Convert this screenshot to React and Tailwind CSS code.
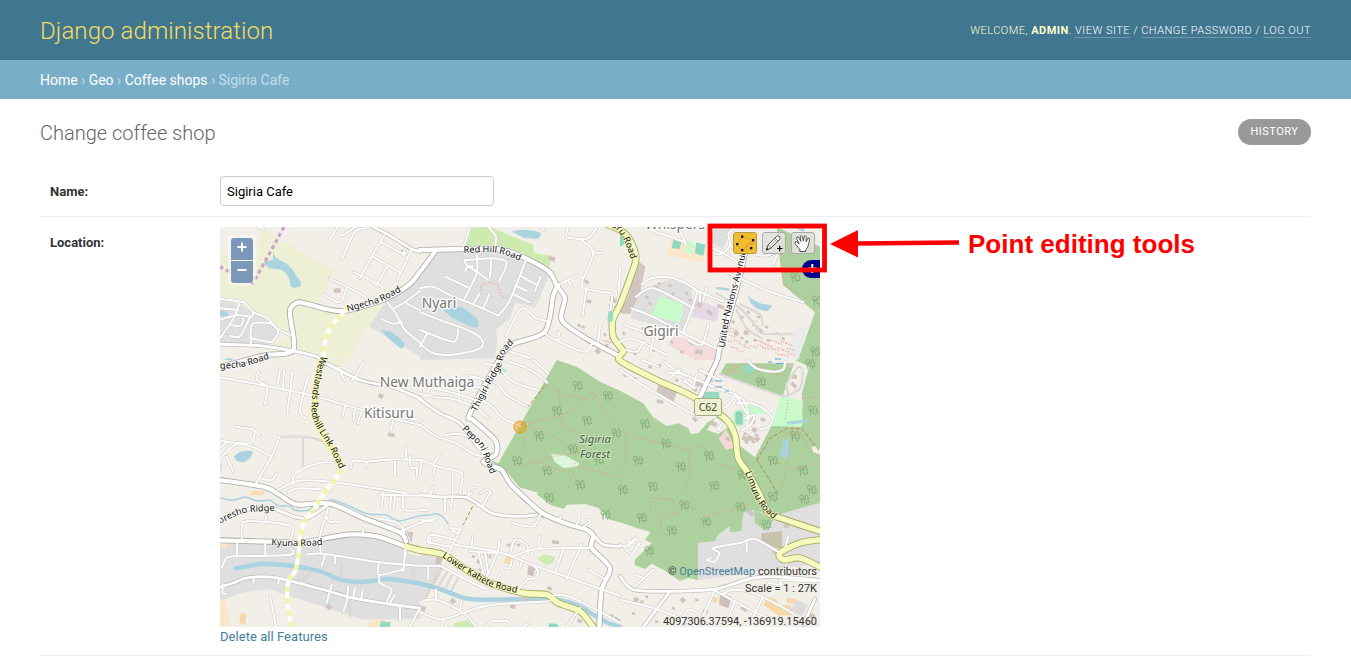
import React from "react";

// Survey sheets: every sheet has its own origin and is digitised at three units per map pixel.
const SHEETS = {
  A: [220, 225], B: [420, 225], C: [620, 225],
  D: [220, 360], E: [420, 360], F: [620, 360],
  G: [220, 493], H: [420, 493], I: [620, 493],
};

function points(src) {
  let sheet = SHEETS.A;
  const out = [];
  src.trim().split(/\s+/).forEach((t) => {
    if (SHEETS[t]) { sheet = SHEETS[t]; return; }
    const [x, y] = t.split(",").map(Number);
    out.push([sheet[0] + x / 3, sheet[1] + y / 3]);
  });
  return out;
}
const f = (n) => n.toFixed(1);
function line(src) {
  return "M" + points(src).map(([x, y]) => f(x) + " " + f(y)).join("L");
}
function curve(src) {
  const p = points(src);
  let d = "M" + f(p[0][0]) + " " + f(p[0][1]);
  for (let i = 0; i < p.length - 1; i++) {
    const a = p[i - 1] || p[i], b = p[i], c = p[i + 1], e = p[i + 2] || c;
    d += `C${f(b[0] + (c[0] - a[0]) / 7)} ${f(b[1] + (c[1] - a[1]) / 7)} ${f(c[0] - (e[0] - b[0]) / 7)} ${f(c[1] - (e[1] - b[1]) / 7)} ${f(c[0])} ${f(c[1])}`;
  }
  return d;
}

const AREAS = [
  ["#eef0d5", "A 118,6 A 342,134 292,238 372,258 492,232 448,304 386,405 300,400 225,375 160,360 210,330 110,270 0,218 0,80 110,115"],
  ["#eef0d5", "D 310,0 386,0 350,32 310,15"],
  ["#e0dfdf", "A 0,222 60,240 110,268 180,312 158,358 0,352"],
  ["#e0dfdf", "A 600,135 540,200 495,232 448,304 600,395 B 0,405 225,400 232,345 228,315 270,280 285,232 345,250 392,140 300,100 230,80 50,80 0,140"],
  ["#cdebb0", "B 148,6 210,6 340,60 342,84 392,92 388,128 300,92 240,70 132,66"],
  ["#e0dfdf", "C 60,195 160,160 215,190 220,240 190,322 30,280"],
  ["#e0dfdf", "C 285,6 335,6 310,75 270,50"],
  ["#c8facc", "C 118,214 192,235 180,294 96,272"],
  ["#e6d9e6", "C 228,222 298,250 290,290 215,276"],
  ["#f4dcdc", "C 165,330 300,375 285,405 225,405 145,360"],
  ["#fbe6cc", "C 152,40 262,75 248,114 140,90"],
  ["#8fd8c0", "C 160,45 185,50 178,72 156,70"],
  ["#8fd8c0", "C 228,52 256,60 250,92 225,85"],
  ["#8fd8c0", "C 0,20 10,25 18,55 0,65"],
  ["#c8facc", "C 200,48 222,52 217,88 194,82"],
  ["#d1c5c0", "C 50,105 76,125 60,205 30,268 0,265 28,205"],
  ["#add19e", "C 470,6 600,65 600,255 585,262 490,180 478,90"],
  ["#add19e", "C 585,262 600,255 600,405 530,405 550,360"],
  ["#ebebeb", "C 530,302 565,310 535,405 500,375"],
  ["#add19e", "E 410,0 470,20 540,65 600,92 F 70,130 100,172 140,198 175,190 205,205 212,222 235,220 262,188 290,170 330,195 350,250 405,292 455,197 543,200 548,130 545,100 568,20 525,0 600,0 600,405 I 600,30 460,70 400,52 370,60 365,115 330,118 330,100 295,125 285,145 235,150 235,262 205,255 180,264 130,230 95,212 75,228 43,215 45,200 95,150 75,140 92,117 50,105 0,88 H 570,80 535,45 495,33 440,35 432,48 390,35 350,4 E 355,398 298,382 260,335 232,320 210,300 235,310"],
  ["#e0dfdf", "I 600,30 460,70 400,52 370,60 365,115 330,118 330,100 295,125 285,145 235,150 235,262 350,245 480,225 600,215"],
  ["#add19e", "I 402,50 460,80 440,115 405,90"],
  ["#c5c3ab", "I 425,120 485,115 487,170 422,150"],
  ["#f2efe9", "F 260,210 286,172 330,198 295,222"],
  ["#f4d7d7", "F 318,208 345,262 318,270 296,236"],
  ["#add19e", "F 318,10 440,10 522,10 488,108 300,42"],
  ["#99d9c3", "F 372,14 405,18 402,40 372,38"],
  ["#c8facc", "F 482,108 545,122 548,190 543,200 455,197"],
  ["#c8facc", "F 380,128 430,145 448,160 395,164 370,140"],
  ["#99d9c3", "F 246,95 298,95 298,125 238,112"],
  ["#d1c5c0", "F 120,62 174,90 160,126 106,104"],
  ["#def6dc", "E 393,283 432,284 478,310 472,320 430,324 405,306"],
  ["#f2efe9", "F 575,262 585,258 600,268 600,284 580,276"],
  ["#cdebb0", "H 350,196 375,184 406,191 400,210 380,216"],
  ["#cdebb0", "H 105,390 140,382 166,402 100,402"],
  ["#e0dfdf", "G 0,145 160,145 300,150 360,130 470,130 560,160 555,180 600,190 600,378 430,380 210,310 145,288 60,300 0,325"],
  ["#e0dfdf", "H 0,180 60,190 65,220 20,318 0,325"],
  ["#fbe6cc", "G 0,318 18,320 32,400 0,400"],
  ["#fbe6cc", "G 2,148 24,148 20,164 2,164"],
  ["#fbe6cc", "G 446,380 515,384 512,402 445,402"],
  ["#99d9c3", "G 482,384 512,388 510,402 480,402"],
  ["#f6d7ad", "G 62,360 80,364 75,395 58,390"],
  ["#fad8a5", "I 440,312 470,318 475,335 510,335 520,365 475,368 430,335"],
  ["#fad8a5", "I 500,315 528,318 525,332 500,330"],
  ["#fad8a5", "I 280,310 295,315 288,330 277,325"],
  ["#fad8a5", "H 258,188 272,192 268,214 252,210"],
  ["#8fd8c0", "H 388,390 412,394 415,402 385,402"],
  ["#c6c2b8", "I 300,300 334,312 325,345 298,335"],
  ["#dcdcdc", "I 530,320 565,335 545,370 510,350"],
  ["#e0dfdf", "D 0,310 8,312 5,335 0,332"],
  ["#fbdcb4", "D 95,392 135,392 130,405 90,405"],
  ["#b6f0c5", "E 245,20 260,30 248,46 240,40"],
  ["#d1c5c0", "G 558,115 580,118 575,150"],
  ["#cfbfb8", "H 50,190 68,195 60,218 45,212"],
  ["#cfbfb8", "H 325,218 345,225 340,250 322,245"],
  ["#cfbfb8", "I 305,308 332,318 325,345 298,335"],
];
const WATER = [
  "A 160,82 170,100 205,120 228,150 244,180 216,187 205,155 185,135 150,130 132,112 158,105",
  "A 0,255 22,262 24,275 0,272", "A 14,402 30,400 40,405 12,405",
  "A 482,316 515,322 552,355 543,370 505,340",
  "B 275,20 310,14 358,22 355,40 315,40", "B 70,255 120,245 172,283 166,308 95,278",
  "C 382,208 395,222 425,236 455,242 440,258 410,250 392,235", "C 288,186 325,190 325,197 290,193",
  "C 515,0 550,6 550,20 530,10",
  "D 42,290 60,276 96,273 93,290 72,306 50,303",
  "F 490,236 508,240 504,262 510,282 496,294 480,284 488,262",
  "F 500,185 555,180 555,188 500,194",
];
const RIVERS = [
  [4.5, "G 48,226 90,218 130,212 210,218 260,226 310,238 350,256 400,266 450,265 495,258 540,262 600,272 H 60,288 135,316 200,320 340,318 420,322 480,340 520,365 560,388 600,402"],
  [1.6, "G 0,14 40,22 75,12 110,24 150,22 175,38 210,40 225,52 265,52 285,36 320,36 332,20 375,34 440,62 500,66 535,84 600,68 H 30,66 50,62 68,72 84,92"],
];
// Kinds: s = service, m = residential, w = tertiary, W = main white, y = secondary
const ROADS = [
  ["m", "A 100,0 130,12"],
  ["m", "A 352,8 330,42"], ["m", "A 366,102 405,20 440,10"], ["m", "A 366,32 405,8"],
  ["m", "A 492,32 455,95 420,160"], ["m", "A 484,52 548,86 552,78"], ["m", "A 458,95 540,142"], ["m", "A 402,142 440,160 490,188"], ["m", "A 575,72 532,165"], ["m", "A 502,125 468,182"], ["m", "A 550,92 556,84"],
  ["m", "A 330,162 380,185 435,215"], ["m", "A 310,208 360,232 380,188"],
  ["m", "A 0,222 70,232 100,262 140,278 170,310 210,330"], ["m", "A 0,285 50,270 92,275 100,262"], ["m", "A 60,230 45,272 28,300 0,340"], ["m", "A 30,300 62,302 70,282"], ["m", "A 30,332 60,334 90,276"], ["m", "A 92,355 92,320 100,295 150,295 175,320 155,352"], ["m", "A 92,340 130,348 155,352"], ["m", "A 0,250 55,255"],
  ["m", "A 502,232 530,270 555,315 600,352"], ["m", "A 522,250 560,228 600,198"], ["m", "A 484,282 520,296 546,290"], ["m", "A 560,235 600,256"],
  ["m", "B 150,6 130,70"], ["m", "B 205,6 228,35 225,62"], ["m", "B 365,6 372,16"],
  ["m", "B 170,88 170,145 130,228"], ["m", "B 135,106 215,100 260,112 238,168"], ["m", "B 214,104 210,158"], ["m", "B 134,108 140,122 158,124"], ["m", "B 136,138 148,126 205,165"], ["m", "B 75,155 145,188"],
  ["m", "B 318,105 270,225 235,272"], ["m", "B 0,190 40,185 100,215 160,238 235,272"], ["m", "B 300,152 348,178"], ["m", "B 362,155 345,198"], ["m", "B 285,180 320,198"], ["m", "B 278,206 328,232"], ["m", "B 178,205 162,235"], ["m", "B 208,208 190,250"],
  ["m", "B 0,262 60,285 150,318 186,345 180,370 110,388 40,385 0,355"], ["m", "B 0,315 100,350 115,312"], ["m", "B 22,325 0,365"],
  ["m", "B 258,332 305,250 345,278 378,288"], ["m", "B 412,185 430,172 470,154 490,160"], ["m", "B 445,168 455,185"], ["m", "B 435,170 440,182"],
  ["m", "B 444,6 440,35 480,42 505,40 530,10"], ["m", "B 480,42 520,82 490,160 488,188 540,200 575,208 570,262"], ["m", "B 500,185 488,272"], ["m", "B 520,82 545,84"], ["m", "B 600,130 596,205"],
  ["m", "B 372,322 400,342 492,380 515,358"], ["m", "B 415,320 420,340 410,345"], ["m", "B 540,300 535,350"], ["m", "B 270,380 330,400"],
  ["m", "C 90,15 190,50 195,60"], ["m", "C 175,8 195,50"], ["m", "C 270,80 300,88 330,62 325,28 340,10"], ["m", "C 330,60 370,95"], ["m", "C 410,90 440,92 470,84 460,118"], ["m", "C 260,60 320,90 350,110"],
  ["m", "C 65,178 100,158 160,160 222,190 228,215 188,325"], ["m", "C 48,215 100,190 222,250"], ["m", "C 35,250 105,278 200,330 290,370"], ["m", "C 12,300 100,330"], ["m", "C 0,350 30,340 60,350 140,390"], ["m", "C 225,195 310,230"], ["m", "C 260,190 250,225"], ["m", "C 240,204 240,230"], ["m", "C 0,370 50,380 70,350"],
  ["m", "C 268,130 310,138 450,200 550,232"], ["s", "C 290,205 360,250 405,300 430,325 515,328"], ["m", "C 205,345 245,360 265,300"], ["s", "C 362,238 420,268 428,300"], ["s", "C 350,255 380,310 425,340"], ["m", "C 100,340 90,390"],
  ["m", "D 115,35 110,60 140,80 135,132"], ["m", "D 180,28 172,82"], ["m", "D 192,30 188,85"], ["m", "D 218,35 202,158"], ["m", "D 265,45 240,150 258,175"],
  ["m", "D 0,52 130,76 290,110 430,150 E 0,180"], ["m", "D 375,140 368,170"], ["m", "D 405,148 400,180"], ["m", "D 425,155 412,190"], ["m", "D 430,8 410,45 395,62"], ["m", "D 355,22 375,62"],
  ["m", "D 525,178 600,195"], ["m", "D 520,180 512,210"],
  ["m", "D 48,200 95,208 120,225"], ["m", "D 105,212 90,250 0,242"], ["m", "D 0,295 50,252 100,262 150,288"], ["m", "D 20,245 0,265"], ["m", "D 20,290 40,335"], ["m", "D 178,230 160,280 105,375"], ["s", "D 176,230 250,230 300,240 322,258"], ["s", "D 250,232 248,320"], ["m", "D 120,355 155,360 170,340"],
  ["m", "D 342,308 300,308 240,330 220,350 220,372"], ["m", "D 175,390 225,365 300,362 400,375 560,400"], ["m", "D 392,325 398,302 440,305 520,298 600,300"], ["m", "D 440,305 440,320"], ["m", "D 525,305 525,345"], ["m", "D 556,260 560,300"], ["m", "D 570,290 572,322 590,325 590,350"], ["m", "D 205,395 240,385 330,390"],
  ["m", "E 190,10 230,20 280,65 350,90"], ["m", "E 270,6 310,20 350,42 382,68"], ["m", "E 340,0 385,40"], ["m", "E 150,48 230,70 260,105 320,140"], ["m", "E 170,115 210,135 250,175 300,198"], ["m", "E 55,55 150,78 200,85"], ["m", "E 0,100 25,108 35,85 160,118 170,150"], ["m", "E 40,112 90,115 150,135"], ["m", "E 115,108 120,125"], ["m", "E 165,138 205,175"], ["m", "E 150,48 195,60"], ["m", "E 190,90 170,110"],
  ["m", "E 0,195 50,230 110,250 160,282 200,290"], ["m", "E 75,225 120,222 160,240 195,272"], ["m", "E 0,298 60,322 125,340 120,400"], ["m", "E 62,280 40,312"], ["m", "E 5,300 0,340"], ["m", "E 98,340 98,402"], ["m", "E 45,320 40,345"], ["m", "E 40,380 30,405"], ["m", "E 145,402 150,385 165,382"], ["m", "E 180,400 200,388 215,400"],
  ["m", "F 135,5 165,30 245,65 305,90 350,105 360,130"], ["m", "F 140,38 180,40 200,50"], ["m", "F 150,55 180,28"], ["m", "F 65,0 115,20"], ["m", "F 0,30 60,70 110,100 210,158 240,170"], ["m", "F 310,145 330,130 345,108 370,120 385,160 380,205"], ["m", "F 350,130 390,130 430,145 458,175 445,200 420,208"], ["m", "F 370,178 400,165 400,180 385,200 365,210"], ["m", "F 350,110 380,160"], ["m", "F 300,60 240,30"], ["s", "F 300,42 490,108 500,70 535,20"], ["m", "F 380,0 410,25 460,35 490,28 495,5"], ["s", "F 535,20 548,30 540,85 500,108"], ["m", "F 295,210 305,190"], ["m", "F 230,42 220,80"], ["m", "F 190,62 225,85"],
  ["m", "G 490,0 485,40"], ["m", "G 515,2 510,45"], ["m", "G 480,5 600,8"], ["m", "G 550,10 552,50 600,52"], ["m", "G 525,4 522,44"],
  ["m", "G 65,138 68,90 110,85 215,100 212,138"], ["m", "G 138,68 138,86"], ["m", "G 360,88 328,86 320,70"], ["m", "G 325,45 300,128 302,180"], ["m", "G 5,225 20,195 50,190 210,185 212,165"], ["m", "G 50,188 52,145"], ["m", "G 136,145 136,186"],
  ["m", "G 262,185 310,182 480,208 600,218 H 60,218"], ["m", "G 315,185 305,220"], ["m", "G 345,190 345,212"], ["s", "G 362,195 362,255"], ["m", "G 478,208 476,245 540,232 550,225"], ["m", "G 476,245 480,270 515,290 500,325"], ["m", "G 525,305 510,330"], ["m", "G 555,175 550,235"], ["s", "G 578,215 578,260"],
  ["w", "G 0,282 40,270 80,255 150,252 215,265 310,290 400,315 500,332 600,345"], ["m", "G 102,255 100,270"], ["m", "G 178,258 174,272"], ["m", "G 8,275 8,300 18,302"], ["m", "G 335,275 320,330"], ["m", "G 385,280 378,335 370,355"], ["m", "G 405,285 400,312"], ["m", "G 428,290 424,315"], ["s", "G 385,315 390,370"], ["m", "G 540,335 540,380"], ["m", "G 600,345 570,400"], ["m", "G 150,310 168,400"], ["m", "G 555,160 558,185"], ["m", "G 430,108 428,125"],
  ["s", "G 265,230 270,240 245,268"], ["s", "G 248,232 236,262 258,270"], ["s", "G 244,246 264,250"],
  ["m", "G 465,75 520,85 545,100 552,118"], ["m", "G 540,115 600,90"],
  ["w", "H 0,5 60,12 140,14 220,62 300,70 350,65"], ["m", "H 75,14 75,58"], ["m", "H 98,12 92,45"], ["m", "H 210,0 185,45"], ["m", "H 155,0 140,12"], ["m", "H 365,55 340,100 275,90"], ["m", "H 0,90 50,75"], ["m", "H 0,80 40,85"], ["m", "H 0,50 20,52"],
  ["m", "H 125,102 68,215"], ["m", "H 90,105 120,110"], ["m", "H 95,112 115,120"], ["m", "H 22,148 34,125 105,140"], ["m", "H 32,135 30,150"], ["m", "H 25,148 95,162"],
  ["m", "H 105,155 225,175 275,190 350,220 600,308"], ["m", "H 158,130 155,160"], ["m", "H 238,142 232,180 200,250"], ["m", "H 275,192 350,168 510,165"], ["m", "H 360,130 355,150 362,168"], ["m", "H 270,185 285,140 320,155 325,185"], ["m", "H 430,170 405,238"], ["m", "H 484,155 440,258"], ["m", "H 175,175 190,240"], ["m", "H 150,175 230,180"], ["m", "H 195,178 205,245"], ["m", "H 275,200 270,225 255,225"], ["m", "H 305,205 300,225"], ["m", "H 505,230 550,255"], ["m", "H 422,70 418,80"], ["m", "H 480,70 470,95"], ["m", "H 500,80 512,85 492,100"],
  ["m", "H 65,220 100,240 190,285 210,282"], ["s", "H 85,230 55,280"], ["s", "H 100,238 75,288"], ["s", "H 118,250 95,290"], ["m", "H 25,222 25,260"], ["m", "H 240,240 232,262"], ["s", "H 70,222 42,272"],
  ["m", "H 0,330 15,322 55,322 130,360 170,402"], ["m", "H 0,358 70,378 200,338 390,325"], ["m", "H 48,290 48,318"], ["m", "H 125,322 120,350"], ["m", "H 70,378 65,402"], ["m", "H 200,402 215,385 260,385 280,402"], ["m", "H 310,402 325,390"], ["m", "H 345,220 355,240 340,258 325,258 295,288"], ["m", "H 480,345 440,402"], ["m", "H 380,310 440,308 520,345 600,390"],
  ["w", "I 0,250 40,290 150,295 285,288 400,255 480,252 600,262"], ["w", "I 70,402 150,295"], ["m", "I 0,155 20,160 50,135"], ["m", "I 20,160 40,140"], ["m", "I 15,165 35,182 60,150"], ["m", "I 20,145 42,150"], ["m", "I 45,280 100,230"], ["m", "I 45,245 70,255"],
  ["m", "I 272,195 262,202 285,205 298,180 280,165 360,150 405,138 480,180"], ["m", "I 380,150 380,175"], ["m", "I 505,130 495,165"],
  ["m", "I 0,320 100,345 170,372 230,402"], ["m", "I 280,290 400,355 500,395"], ["m", "I 310,302 340,290 400,300 500,350 560,395"], ["m", "I 285,290 240,390"], ["w", "I 585,318 550,395"], ["m", "I 445,270 485,275 485,262 600,265"], ["m", "I 430,310 400,370"], ["m", "I 345,325 325,375"], ["m", "I 180,400 205,350 240,365"],
  ["w", "A 450,0 520,38 575,72 600,80 B 0,75 55,75"], ["W", "B 0,75 132,72 230,72 300,92 385,138 412,185 435,220 425,285 490,335 600,395"],
  ["W", "B 45,80 12,125 0,140 A 575,172 540,198 480,228 372,258 310,250 240,232 215,245 210,270 220,375 140,390 90,402 D 0,22"],
  ["w", "A 0,358 120,362 220,378 290,395 D 310,5 420,60 520,82 600,115 E 0,118 60,160 120,190 170,255 210,300"],
  ["W", "B 415,180 400,210 375,320 278,358 240,400 E 150,160 160,180 225,240 228,282 190,305 E 215,318 245,330 270,370 305,405 H 320,20 370,62 440,92 500,110 520,130 515,165 570,225 545,290 538,402"],
  ["w", "H 520,125 550,155 600,160"],
  ["W", "D 0,360 130,380 175,402 G 200,20 235,35 330,32 430,75 540,118 558,145"], ["W", "G 0,142 150,146 250,148 380,125 470,130 560,162"], ["w", "G 160,45 225,72 265,75 320,38"], ["w", "G 0,82 50,60 100,45 160,45"],
  ["W", "C 375,85 348,200 298,375 F 292,0 240,110"],
  ["y", "B 565,0 600,15 C 30,45 48,100 30,160 0,240 B 578,285 580,335 600,365 C 10,380 F 0,2 110,60 200,100 260,135 F 320,180 345,225 355,295 385,340 420,405 I 445,60 480,75 600,115"],
  ["y", "I 600,140 540,150 480,180 490,200 540,195 600,222"],
  ["y", "G 558,160 600,172 H 70,185 130,225 210,270 310,300 380,305 415,330 480,355 520,402"],
];
const STRIPED = "A 385,240 360,275 335,300 318,340 308,405 D 290,70 285,150 310,230 365,310 350,350 310,402 G 285,45 255,80 240,130 235,190 225,235 205,265 202,330 215,402";
const PATHS = [
  "E 380,70 430,105 515,120 550,100 600,160", "E 415,85 420,130 430,200 485,220", "E 300,195 370,210 480,280 390,290 300,320", "E 520,90 460,150 410,170 300,195", "E 320,195 300,320", "E 465,310 440,400", "E 470,320 600,350", "E 330,300 450,340", "E 600,200 560,160 515,95",
  "F 0,212 60,235 130,250 205,268 210,350 180,400", "F 205,268 245,255 290,310 350,330", "F 15,220 18,300 0,330", "F 545,115 600,110", "F 420,280 480,230 535,205 570,275 600,285", "F 465,300 520,330 600,305", "F 520,200 490,370 470,405",
  "I 95,15 90,50 125,75 120,110 145,130", "I 95,15 160,20 165,60 125,75", "I 180,20 260,70 380,40 400,15",
  "C 480,90 490,180", "C 490,180 560,220 600,170", "C 500,65 520,115",
  "F 318,40 370,10 420,20", "F 400,40 430,30 495,45", "F 505,120 495,180",
  "B 183,206 182,182 210,172 235,180 240,210 262,220", "H 62,225 10,325", "E 0,110 20,60",
];
const TREES = "C 525,158 C 590,228 E 472,78 E 563,108 E 410,153 E 500,182 E 588,220 E 356,228 E 290,303 E 458,268 E 380,333 E 480,375 E 536,300 F 422,66 F 74,192 F 137,252 F 266,288 F 182,320 F 53,302 F 8,390 F 98,380 F 282,378 F 458,302 F 524,228 F 548,332 F 578,152 F 366,345 F 570,12 I 65,75 I 258,87 I 155,113 I 192,37 I 360,42 I 438,95 I 87,174 I 457,12 I 552,20 H 386,15 H 556,66 F 575,390 C 585,380";
const BUILDINGS = "A 350,196 A 548,84 D 484,108 D 512,225 G 328,343 B 500,172 B 394,100 B 508,230 B 535,380 B 578,225 H 180,205 H 335,232 H 318,318 H 390,288 H 280,340 H 405,148 H 100,325 H 480,385 H 5,345 I 258,355 I 190,322 I 370,348 I 50,320 I 500,100 I 392,58 I 465,178 I 578,368 C 268,262 C 240,240 C 215,355 C 235,380 C 422,320 C 350,325 C 300,245 C 380,322 F 225,180 F 280,190 F 325,238 F 525,50 F 520,75 F 400,185 F 430,180 F 235,72 F 225,90 F 405,210 F 118,125 F 395,235 F 410,240 F 375,235 F 512,20 H 575,370 H 590,380 H 370,68 H 198,185";
const SPECKS = "C 95,190 C 118,175 C 130,200 C 150,180 C 160,205 C 175,222 C 200,205 C 80,215 C 90,235 C 110,185 C 70,310 C 85,360 C 45,385 C 210,225 C 12,325 C 100,375 C 155,350 C 185,380 C 232,345 C 260,320 C 340,290 C 365,275 C 385,260 C 415,275 C 440,305 C 470,325 C 490,340 C 380,350 C 405,345 C 365,338 C 445,345 F 15,45 F 45,55 F 70,75 F 90,20 F 120,15 F 170,60 F 205,72 F 260,45 F 275,60 F 375,220 F 388,228 F 410,225 F 380,245 F 400,245 F 415,235 H 160,190 H 215,180 H 265,155 H 280,150 H 295,155 H 210,190 H 180,230 H 100,105 I 65,325 I 80,310 I 40,360 I 90,375 I 110,385 I 160,345 I 230,320 I 350,375 B 555,328 B 572,340 B 580,300 B 490,305 B 478,300 B 560,360";
const RED_SPECKS = "C 405,300 C 418,345 C 430,352 C 445,358 C 460,345 C 475,352 C 490,348 C 505,355 C 510,370 C 495,375 C 480,368 C 465,372 C 450,365 C 435,368 C 420,360 C 400,362 C 380,365 C 365,355 C 350,345 C 335,330 C 325,345 C 340,365 C 360,375 C 512,385 C 495,388 C 475,385 C 340,310 C 325,315 C 400,285 C 415,312 B 575,240 B 580,215 B 570,350 B 556,345 F 330,30 F 345,15 F 350,35 F 420,18 F 440,30 F 465,38";

const KINDS = ["s", "m", "w", "W", "y"];
const CASE = { s: 1.9, m: 3.1, w: 4.2, W: 5.9, y: 7.2 };
const FILL = { s: 1, m: 2, w: 2.9, W: 4.3, y: 5.5 };
const CASE_COLOR = { s: "#cccac8", m: "#cbc9c7", w: "#b9b7b5", W: "#aaa8a6", y: "#a3a860" };

const LABELS = [
  ["ngecha", "Ngecha Road", "A 383,260 440,244 490,228 545,198"],
  ["ngecha2", "gecha Road", "D 1,26 60,22 100,12 A 155,398"],
  ["redhill", "Red Hill Road", "B 131,84 180,82 225,83 260,91 310,112"],
  ["thigiri", "Thigiri Ridge Road", "E 170,155 202,92 242,22 B 257,380 300,338"],
  ["peponi", "Peponi Road", "E 125,208 150,233 178,260 195,300 212,345"],
  ["westlands", "Westlands Redhill Link Road", "A 305,393 D 296,10 282,70 275,130 278,175 298,215 325,258 360,330 372,355"],
  ["loresho", "oresho Ridge", "G 0,92 50,68 90,57 180,53"],
  ["kyuna", "Kyuna Road", "G 154,156 230,160 320,155"],
  ["kabete", "Lower Kabete Road", "H 66,193 120,228 160,252 210,280 310,304"],
  ["limuru", "Limuru Road", "F 375,338 390,375 I 402,8 425,45 475,92"],
  ["limuru2", "uru Road", "C -28,4 -5,20 14,50 32,100"],
  ["nations", "United Nations Avenue", "C 314,369 330,270 352,190 382,66"],
];

function PlaceName({ x, y, children }) {
  return (
    <text x={x} y={y} textAnchor="middle" className="fill-[#777] font-['Noto_Sans',sans-serif] text-[13.8px]" stroke="#fff" strokeOpacity=".75" strokeWidth="3" strokeLinejoin="round" paintOrder="stroke">{children}</text>
  );
}

function Map() {
  return (
    <svg width="600" height="400" viewBox="220 227 600 400" className="block overflow-hidden">
      <rect x="220" y="227" width="600" height="400" fill="#f2efe9" />
      {AREAS.map(([c, s], i) => <path key={i} d={line(s) + "Z"} fill={c} />)}
      {WATER.map((s, i) => <path key={i} d={curve(s) + "Z"} fill="#aad3df" />)}
      {RIVERS.map(([w, s], i) => <path key={i} d={curve(s)} fill="none" stroke="#aad3df" strokeWidth={w} strokeLinecap="round" />)}
      {points(BUILDINGS).map(([x, y], i) => <rect key={i} x={x - 3} y={y - 2} width={i % 3 ? 5 : 7} height={i % 2 ? 3.5 : 4.5} fill="#d0c4bc" transform={`rotate(${(i * 37) % 50} ${x} ${y})`} />)}
      {points(SPECKS).map(([x, y], i) => <rect key={i} x={x - 1.5} y={y - 1} width="3.4" height="2.6" fill="#cfc2ba" transform={`rotate(${(i * 29) % 60} ${x} ${y})`} />)}
      {points(RED_SPECKS).map(([x, y], i) => <path key={i} d={`M${x - 3} ${y}l7 2`} stroke="#f39b90" strokeWidth="1" strokeDasharray="1.4 1.4" />)}
      {PATHS.map((s, i) => <path key={i} d={line(s)} fill="none" stroke="#ef8f7d" strokeWidth=".9" strokeDasharray="1.2 1.9" />)}
      <g fill="none" stroke="#b3894a" strokeWidth="1" strokeDasharray="4 2">
        <path d={line("F 410,300 450,235 500,205 545,205 600,275")} />
        <path d={line("F 410,300 440,345 475,405")} />
        <path d={line("H 158,40 130,95")} />
        <path d={line("E 385,65 320,145")} />
      </g>
      {points(TREES).map(([x, y], i) => (
        <g key={i} transform={`translate(${f(x)} ${f(y)})`} fill="none" stroke="#85ac78" strokeWidth=".9">
          <ellipse cx="-2.2" cy="-2.1" rx="2" ry="2.5" /><path d="M-2.2-2V5M2.5-5L.3-1.2H1.5L0 2.6H5L3.5-1.2H4.7ZM2.5 2.6V4.8" />
        </g>
      ))}
      {KINDS.map((k) => (
        <g key={k} fill="none" stroke={CASE_COLOR[k]} strokeWidth={CASE[k]} strokeLinejoin="round" strokeLinecap="round">
          {ROADS.filter((r) => r[0] === k).map((r, i) => <path key={i} d={curve(r[1])} />)}
        </g>
      ))}
      {KINDS.map((k) => (
        <g key={k} fill="none" stroke={k === "y" ? "#f7fabf" : k === "s" ? "#e8e6e4" : "#fff"} strokeWidth={FILL[k]} strokeLinejoin="round" strokeLinecap="round">
          {ROADS.filter((r) => r[0] === k).map((r, i) => <path key={i} d={curve(r[1])} />)}
        </g>
      ))}
      <g fill="none" strokeWidth="4.2">
        <path d={curve(STRIPED)} stroke="#fff" /><path d={curve(STRIPED)} stroke="#f0f5a8" strokeDasharray="6 6" />
      </g>
      <path d={curve("D 308,0 290,70 285,150 310,230 365,305")} fill="none" stroke="#eff3a5" strokeWidth="5.5" />
      <path d={line("A 192,6 98,176 0,125")} fill="none" stroke="#c993c9" strokeOpacity=".85" strokeWidth="3.2" strokeDasharray="4 3" />
      <g fill="none" stroke="#59a3e0" strokeWidth="1.2"><path d="M715 381h7M715 387h7M725 391h4M768 362h4M776 363.500h7M775 359h6" /></g>
      <rect x="734.5" y="410.500" width="9" height="15" rx="4" fill="#8ed3b9" stroke="#bdf3c5" strokeWidth="2" />
      <rect x="608" y="311" width="5" height="11" rx="2" fill="#99d9c3" transform="rotate(8 610 316)" />

      <PlaceName x="439" y="307.500">Nyari</PlaceName>
      <PlaceName x="661" y="336">Gigiri</PlaceName>
      <PlaceName x="427" y="386.500">New Muthaiga</PlaceName>
      <PlaceName x="389" y="417.500">Kitisuru</PlaceName>
      <PlaceName x="675" y="229">Whispers</PlaceName>
      <g className="font-['Noto_Sans',sans-serif] text-[11.2px] italic" fill="#3c5f3a" textAnchor="middle" stroke="#dcebd3" strokeOpacity=".7" strokeWidth="2" paintOrder="stroke">
        <text x="595" y="443">Sigiria</text><text x="595" y="457.500">Forest</text>
      </g>
      {LABELS.map(([id, t, s]) => (
        <g key={id}>
          <path id={id} d={curve(s)} fill="none" />
          <text className="font-['Noto_Sans',sans-serif] text-[9.2px]" fill="#111" stroke={/westl|kabete|limuru/.test(id) ? "#f7fabf" : "#fff"} strokeOpacity=".85" strokeWidth="1.6" paintOrder="stroke"><textPath href={"#" + id}>{t}</textPath></text>
        </g>
      ))}
      <rect x="694.500" y="398.500" width="27" height="17" rx="2" fill="#edf0d3" stroke="#a5ab7c" />
      <text x="708" y="411" textAnchor="middle" className="font-['Noto_Sans',sans-serif] text-[10.5px]" fill="#47491d">C62</text>

      <circle cx="520" cy="427" r="6" fill="#ee9900" fillOpacity=".45" stroke="#ee9900" />

      <rect x="228" y="235" width="28" height="51" rx="4" fill="#fff" fillOpacity=".4" />
      <path d="M231 260V241q0-3 3-3h16q3 0 3 3V260Z" fill="#7b98bc" />
      <path d="M231 261H253V280q0 3-3 3H234q-3 0-3-3Z" fill="#7b98b8" />
      <path d="M237.500 247h9M242 242.500v9M237.500 270h9" stroke="#fff" strokeWidth="2" />

      <path d="M820 260h-9a9 9 0 0 0 0 18h9Z" fill="#00008b" />
      <path d="M812.300 264v9M808 268.500h8.600" stroke="#fff" strokeWidth="2" />
      <g strokeWidth="1">
        <rect x="733.500" y="232.500" width="23" height="21" rx="2.500" fill="#efbd2d" stroke="#b69a4b" />
        <path d="M737.500 244.500l4.500-7.500 11 3.500-2 8-9 2.500Z" fill="none" stroke="#d3a127" strokeWidth=".8" />
        <path d="M742 250.500l11-10" stroke="#e8702c" strokeWidth=".9" />
        <g fill="#111"><rect x="736" y="243" width="2.300" height="2.300" /><rect x="741" y="235.500" width="2.300" height="2.300" /><rect x="752" y="239" width="2.300" height="2.300" /><rect x="750" y="247" width="2.300" height="2.300" /><rect x="741" y="249" width="2.300" height="2.300" /></g>
        <rect x="762.500" y="232.500" width="23" height="21" rx="2.500" fill="#e2e1da" fillOpacity=".92" stroke="#aaa" />
        <path d="M766.500 250l1.500-5 8.500-8.500q1.500-1.500 3 0t0 3l-8.500 8.500Z" fill="#fff" stroke="#333" strokeWidth=".9" />
        <path d="M768 245l3 3.200M775 238l3.200 3.200M769.500 246.500l7-7" fill="none" stroke="#777" strokeWidth=".7" />
        <path d="M766 250.500l.8-2.800 2 1.800Z" fill="#111" /><path d="M777 248.500h5.500M779.700 245.800v5.500" stroke="#000" strokeWidth="1.200" />
        <rect x="791.500" y="232.500" width="23" height="21" rx="2.500" fill="#e2e1da" fillOpacity=".92" stroke="#aaa" />
        <path d="M799.800 251.500v-2.200l-4.600-5.500q-.8-2.200 1-2.200l3 2.200-2.700-5.400q0-1.900 1.700-1.500l2.800 4.500-.9-5q.8-1.700 2 0l1.400 4.700.6-5q1.300-1.200 2 .5l.1 5.300 1.600-3.600q1.800-.7 1.800 1.500l-1.800 7.200-2 2.500v2Z" fill="#fff" stroke="#444" strokeWidth=".9" strokeLinejoin="round" />
      </g>
      <g textAnchor="end" className="font-['Roboto',sans-serif] text-[11px]" fill="#333">
        <text x="817" y="575" textLength="149" lengthAdjust="spacingAndGlyphs">© <tspan fill="#447e9b">OpenStreetMap</tspan> contributors</text>
        <text x="817" y="592" textLength="72">Scale = 1 : 27K</text>
        <text x="817" y="625" textLength="154">4097306.37594, -136919.15460</text>
      </g>
    </svg>
  );
}

export default function App() {
  return (
    <div className="relative h-[665px] overflow-hidden bg-white font-['Roboto',sans-serif] text-[13px] text-[#333]">
      <header className="flex h-[60px] items-center justify-between bg-[#417690] px-10">
        <h1 className="pt-0.5 text-2xl font-light tracking-[0.09px] text-[#f5dd5d]">Django administration</h1>
        <div className="pt-0.5 text-[11px] font-light uppercase tracking-[0.48px] text-[#ffffcc]">
          Welcome, <strong className="font-bold">admin</strong>. <a className="border-b border-white/25 text-white">View site</a> / <a className="border-b border-white/25 text-white">Change password</a> / <a className="border-b border-white/25 text-white">Log out</a>
        </div>
      </header>
      <nav className="flex h-[39px] items-center bg-[#79aec8] px-10 text-sm tracking-[-0.02px] text-[#c4dce8]">
        <span className="whitespace-pre"><a className="text-white">Home</a> › <a className="text-white">Geo</a> › <a className="text-white">Coffee shops</a> › Sigiria Cafe</span>
      </nav>
      <main className="px-10 pt-5">
        <div className="flex h-[26px] items-center justify-between">
          <h2 className="pt-0.5 text-xl font-light text-[#666]">Change coffee shop</h2>
          <a className="flex h-[26px] w-[73px] items-center justify-center rounded-full bg-[#999] pt-px text-[11px] uppercase tracking-[0.5px] text-white">History</a>
        </div>
        <div className="mt-[21px] flex h-[51px] items-center border-b border-[#eee] pl-[10px]">
          <label className="w-[170px] pt-0.5 font-bold">Name:</label>
          <div className="flex h-[30px] w-[274px] items-center rounded-[4px] border border-[#ccc] px-1.5 pt-px text-black">Sigiria Cafe</div>
        </div>
        <div className="flex h-[439px] border-b border-[#eee] pl-[10px] pt-[10px]">
          <label className="w-[170px] pt-1.5 font-bold">Location:</label>
          <div>
            <Map />
            <a className="block leading-[19px] tracking-[0.05px] text-[#447e9b]">Delete all Features</a>
          </div>
        </div>
      </main>
      <svg className="pointer-events-none absolute left-[700px] top-[215px]" width="520" height="70" viewBox="700 215 520 70">
        <rect x="710" y="226" width="114.500" height="44" fill="none" stroke="#f00" strokeWidth="4.800" />
        <path d="M856 243.500L959 242.500" stroke="#f00" strokeWidth="4.500" />
        <path d="M830 244L858 230V257.500Z" fill="#f00" />
        <text x="968" y="252.500" textLength="227" lengthAdjust="spacingAndGlyphs" fill="#f00" className="font-['Liberation_Sans',sans-serif] text-[25.500px] font-bold">Point editing tools</text>
      </svg>
    </div>
  );
}
